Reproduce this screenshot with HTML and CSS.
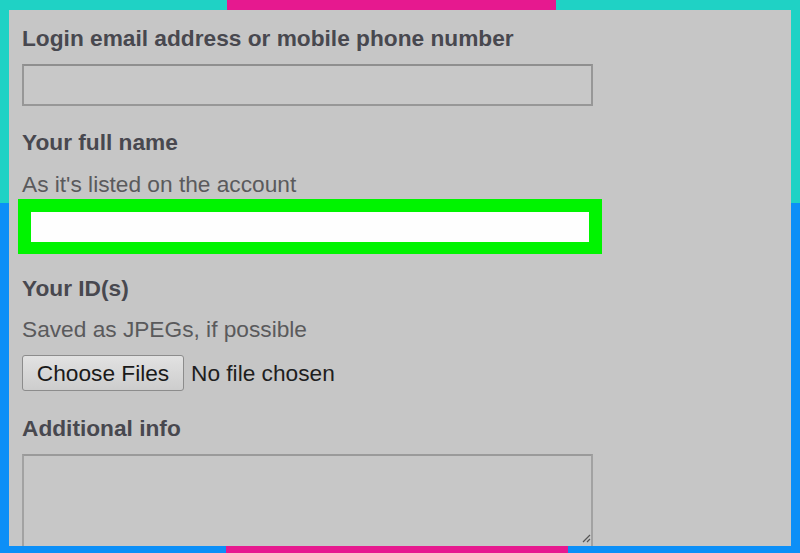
FILE: index.html
```html
<!DOCTYPE html>
<html lang="en">
<head>
<meta charset="utf-8">
<title>ID form</title>
<link rel="stylesheet" href="styles.css">
</head>
<body>
<div class="frame">
  <main class="panel">
    <div class="label first">Login email address or mobile phone number</div>
    <div class="input"></div>

    <div class="label l2">Your full name</div>
    <div class="hint h2">As it's listed on the account</div>
    <div class="highlight"><div class="highlight-inner"></div></div>

    <div class="label l3">Your ID(s)</div>
    <div class="hint h3">Saved as JPEGs, if possible</div>
    <div class="file-row">
      <span class="file-btn">Choose Files</span>
      <span class="file-status">No file chosen</span>
    </div>

    <div class="label l4">Additional info</div>
    <div class="textarea">
      <svg class="grip" width="10" height="10" viewBox="0 0 10 10" aria-hidden="true">
        <path d="M2 9 L9 2 M6 9 L9 6" stroke="#555" stroke-width="1.2" fill="none"/>
      </svg>
    </div>
  </main>
</div>
</body>
</html>
```
FILE: styles.css
```css
* { box-sizing: border-box; }
html, body { margin: 0; padding: 0; }
body { width: 800px; height: 553px; overflow: hidden; }

.frame {
  width: 800px;
  height: 553px;
  padding: 10px 9px 7px 9px;
  background:
    linear-gradient(to right, #1fd2c5 0 227px, #e6198f 227px 556px, #1fd2c5 556px) top left / 100% 10px no-repeat,
    linear-gradient(to right, #0c8ff7 0 226px, #e6198f 226px 568px, #0c8ff7 568px) bottom left / 100% 7px no-repeat,
    linear-gradient(to bottom, #1fd2c5 0 203px, #0c8ff7 203px);
}

.panel {
  width: 100%;
  height: 100%;
  background: #c6c6c6;
  overflow: hidden;
  padding: 15px 0 0 13px;
  display: flex;
  flex-direction: column;
  align-items: flex-start;
  font-family: "Liberation Sans", Arial, sans-serif;
  font-size: 22.7px;
  line-height: 26px;
}
.panel > * { flex-shrink: 0; }

.label {
  font-weight: bold;
  color: #48484f;
}
.hint { color: #5a5a5c; }

.input {
  margin-top: 13px;
  width: 571px;
  height: 42px;
  border: 2px solid #979797;
  border-top-color: #8f8f8f;
  background: #c8c8c8;
}

.l2 { margin-top: 23px; }
.h2 { margin-top: 16px; }

.highlight {
  margin-top: 2px;
  margin-left: -4px;
  width: 584px;
  height: 55px;
  border-style: solid;
  border-color: #00f400;
  border-width: 13px 13px 12px 13px;
  background: #fdfdfd;
}
.highlight-inner { width: 100%; height: 100%; background: #fefefe; }

.l3 { margin-top: 21px; }
.h3 { margin-top: 15px; }

.file-row {
  margin-top: 13px;
  display: flex;
  align-items: center;
  gap: 7px;
  color: #1c1c1c;
}
.file-btn {
  width: 162px;
  height: 36px;
  display: flex;
  align-items: center;
  justify-content: center;
  border: 1px solid #8c8c8c;
  border-radius: 3px;
  background: linear-gradient(to bottom, #e2e2e2, #cdcdcd);
  color: #1a1a1a;
}
.file-status { color: #1e1e1e; }

.l4 { margin-top: 24px; }

.textarea {
  position: relative;
  margin-top: 13px;
  width: 571px;
  height: 96px;
  border: 2px solid #a2a2a2;
  border-top-color: #9a9a9a;
  background: #c7c7c7;
}
.grip {
  position: absolute;
  right: 0;
  bottom: 5px;
}
```
